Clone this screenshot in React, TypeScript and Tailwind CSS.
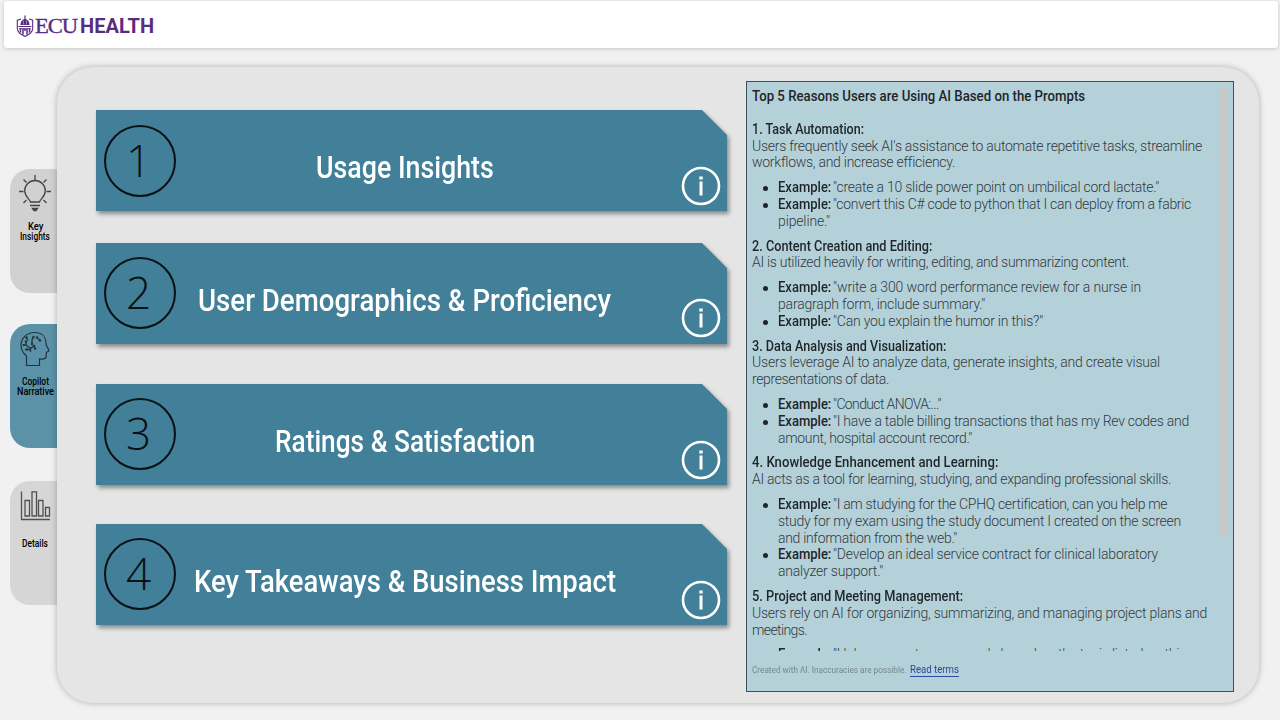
import { useLayoutEffect, useRef, useState, type ReactNode } from "react";

/* Sets a single line of text to a given measure by adjusting its tracking. */
function Fit({ w, children, className = "" }: { w: number; children: ReactNode; className?: string }) {
  const ref = useRef<HTMLSpanElement>(null);
  const [spacing, setSpacing] = useState(0);
  useLayoutEffect(() => {
    const el = ref.current;
    if (!el) return;
    const count = (el.textContent ?? "").length;
    setSpacing((w - el.getBoundingClientRect().width) / count);
  }, [w]);
  return (
    <span ref={ref} className={`inline-block whitespace-nowrap ${className}`} style={{ letterSpacing: `${spacing}px` }}>
      {children}
    </span>
  );
}

/* Sets a single line of text to a given measure by condensing its letters. */
function Condensed({ w, children }: { w: number; children: ReactNode }) {
  const ref = useRef<HTMLSpanElement>(null);
  const [scale, setScale] = useState(1);
  useLayoutEffect(() => {
    const el = ref.current;
    if (el) setScale(w / el.offsetWidth);
  }, [w]);
  return (
    <span className="flex" style={{ width: `${w}px` }}>
      <span ref={ref} className="block shrink-0 origin-left whitespace-nowrap" style={{ transform: `scaleX(${scale})` }}>
        {children}
      </span>
    </span>
  );
}

type Line = [text: string, width: number];
type Section = { title: Line; body: Line[]; items: Line[][] };

const sections: Section[] = [
  {
    title: ["1. Task Automation:", 112],
    body: [
      ["Users frequently seek AI's assistance to automate repetitive tasks, streamline", 450],
      ["workflows, and increase efficiency.", 202],
    ],
    items: [
      [['"create a 10 slide power point on umbilical cord lactate."', 326]],
      [['"convert this C# code to python that I can deploy from a fabric', 358], ['pipeline."', 52]],
    ],
  },
  {
    title: ["2. Content Creation and Editing:", 180],
    body: [["AI is utilized heavily for writing, editing, and summarizing content.", 377]],
    items: [
      [['"write a 300 word performance review for a nurse in', 308], ['paragraph form, include summary."', 207]],
      [['"Can you explain the humor in this?"', 210]],
    ],
  },
  {
    title: ["3. Data Analysis and Visualization:", 194],
    body: [
      ["Users leverage AI to analyze data, generate insights, and create visual", 408],
      ["representations of data.", 137],
    ],
    items: [
      [['"Conduct ANOVA:..."', 108]],
      [['"I have a table billing transactions that has my Rev codes and', 356], ['amount, hospital account record."', 194]],
    ],
  },
  {
    title: ["4. Knowledge Enhancement and Learning:", 246],
    body: [["AI acts as a tool for learning, studying, and expanding professional skills.", 419]],
    items: [
      [
        ['"I am studying for the CPHQ certification, can you help me', 334],
        ["study for my exam using the study document I created on the screen", 403],
        ['and information from the web."', 179],
      ],
      [['"Develop an ideal service contract for clinical laboratory', 325], ['analyzer support."', 105]],
    ],
  },
  {
    title: ["5. Project and Meeting Management:", 211],
    body: [
      ["Users rely on AI for organizing, summarizing, and managing project plans and", 455],
      ["meetings.", 55],
    ],
    items: [[['"Help me create an example based on the topic listed on this', 353]]],
  },
];

function Narrative() {
  return (
    <aside className="-mt-px flex h-[611px] w-[488px] shrink-0 flex-col border border-[#3c5259] bg-[#b4d1da] pt-[6px] pl-[5px] text-[14px] leading-[16.8px]">
      <div className="flex h-[563px] shrink-0">
        <div className="w-[466px] overflow-hidden">
          <div className="mb-[16px] font-medium text-[#1f2528]">
            <Condensed w={333}>Top 5 Reasons Users are Using AI Based on the Prompts</Condensed>
          </div>
          {sections.map((s) => (
            <section key={s.title[0]} className="mb-2 text-[#33393c]">
              <h2 className="flex h-[16.8px] font-medium text-[#1f2528]">
                <Condensed w={s.title[1]}>{s.title[0]}</Condensed>
              </h2>
              {s.body.map(([t, w]) => (
                <p key={t} className="flex h-[16.8px] font-light">
                  <Fit w={w}>{t}</Fit>
                </p>
              ))}
              <ul className="mt-[8px] pl-[26px]">
                {s.items.map((lines) => (
                  <li key={lines[0][0]} className="relative">
                    <span className="absolute top-[7px] -left-[15px] size-[5px] rounded-full bg-[#1f2528]" />
                    {lines.map(([t, w], i) => (
                      <div key={t} className="flex h-[16.8px] font-light">
                        {i === 0 && (
                          <span className="w-[55px] shrink-0 font-medium text-[#1f2528]">
                            <Condensed w={53}>Example:</Condensed>
                          </span>
                        )}
                        <Fit w={w}>{t}</Fit>
                      </div>
                    ))}
                  </li>
                ))}
              </ul>
            </section>
          ))}
        </div>
        <div className="ml-px h-[447px] w-[9px] bg-[#c8c8c8]" />
      </div>
      <footer className="mt-[11px] flex items-center text-[9px] text-[#75868b]">
        <span className="w-[158px]">
          <Condensed w={154}>Created with AI. Inaccuracies are possible.</Condensed>
        </span>
        <a className="border-b border-[#2d489d] text-[11px] leading-[12px] text-[#2d489d]">
          <Condensed w={49}>Read terms</Condensed>
        </a>
      </footer>
    </aside>
  );
}

function Card({ n, title, w, left, gap, ring, info }: { n: number; title: string; w: number; left: string; gap: string; ring: string; info: string }) {
  return (
    <div className={`${gap} drop-shadow-[2px_3px_2px_rgba(0,0,0,0.4)]`}>
      <div className="flex h-[101px] w-[631px] bg-[#418098] [clip-path:polygon(0_0,606px_0,100%_25px,100%_100%,0_100%)]">
        <div className={`${ring} ml-[7.5px] flex size-[72px] shrink-0 items-center justify-center rounded-full border-2 border-[#0a1114] font-['Open_Sans',sans-serif] text-[44px] leading-none font-light text-[#0a1114]`}>
          <span className="-mt-[2px] -ml-[2px]">{n}</span>
        </div>
        <div className="flex flex-1">
          <div className={`${left} mt-[38px] text-[31px] leading-[40px] font-medium text-white`}>
            <Condensed w={w}>{title}</Condensed>
          </div>
        </div>
        <svg className={`${info} mr-[6px] size-[40px] shrink-0`} viewBox="0 0 40 40" fill="none">
          <circle cx="20" cy="20" r="18" stroke="#fff" strokeWidth="2.6" />
          <path d="M20 15.5v14" stroke="#fff" strokeWidth="3" />
          <path d="M20 10.500v3" stroke="#fff" strokeWidth="3.400" />
        </svg>
      </div>
    </div>
  );
}

function Tab({ color, gap, icon, lines }: { color: string; gap: string; icon: ReactNode; lines: Line[] }) {
  return (
    <div className={`${color} ${gap} flex h-[124px] w-[47px] flex-col items-center rounded-l-[20px] text-[10px] leading-[10px] font-medium text-black`}>
      <div className="h-[52px] pl-0.5">{icon}</div>
      <div className={`flex flex-col items-center pl-[3px] ${lines.length === 1 ? "pt-[6px]" : "pt-[1px]"}`}>
        {lines.map(([t, w]) => (
          <Condensed key={t} w={w}>{t}</Condensed>
        ))}
      </div>
    </div>
  );
}

const bulb = (
  <svg className="mt-[5px] h-[40px] w-[36px]" viewBox="0 0 36 40" fill="none" stroke="#444" strokeWidth="1.3">
    <path d="M18 1v5M2 17.500h4.500M29.500 17.500H34M6.500 5.500l3 3M29.500 5.500l-3 3M6.500 29l3-3M29.500 29l-3-3" />
    <path d="M13.500 28c-.8-3.200-5.800-5.200-5.800-11.200a10.300 10.300 0 0 1 20.600 0c0 6-5 8-5.800 11.200zM13 31.500h10" />
    <path d="M15.500 34.500h5l-1.500 2h-2z" fill="#444" />
  </svg>
);

const head = (
  <svg className="mt-[7px] h-[37px] w-[32px]" viewBox="0 0 32 37" fill="none" stroke="#22343b" strokeWidth="1.2">
    <path d="M7.500 34.500V25C4 22 2 18.500 2 14.500 2 7 8 1.500 15.500 1.500S27 6 27 12.500c0 2.500 2.500 5 3 7 .2 1.300-2.500 1-2.700 2.200-.2 1.500.2 3-.3 4.600-.8 2.400-4 1.700-6.500 1.700v6.500z" />
    <path d="M11.500 21v-3.500L7 14v-3M11.500 17.500l4-3.500M7 14H4.500M9 9.500 7.500 6.500M13 13V8.500l1.500-2M18 7l3 2M15.500 14v3M7.500 18.500h4" strokeWidth="1.300" />
    <g fill="#22343b" stroke="none">
      <circle cx="7" cy="10.500" r="1.200" /><circle cx="7.500" cy="6.500" r="1.200" /><circle cx="13" cy="13" r="1.200" />
      <circle cx="14.500" cy="6" r="1.200" /><circle cx="18" cy="6.500" r="1.200" /><circle cx="21" cy="9.500" r="1.200" />
      <circle cx="16" cy="17.500" r="1.200" /><circle cx="7.500" cy="18.500" r="1.300" /><circle cx="4.500" cy="14" r="1.100" />
    </g>
  </svg>
);

const bars = (
  <svg className="mt-[9px] h-[32px] w-[32px]" viewBox="0 0 32 32" fill="none" stroke="#505050" strokeWidth="1.300">
    <path d="M2.500 1.500v28H31M6 10.500h4.500V26H6zM13 1.800h4.500V26H13zM19.500 10.500H24V26h-4.500zM26.500 17.500h4V26h-4z" />
  </svg>
);

function Crest() {
  return (
    <svg className="h-[23px] w-[18px]" viewBox="0 0 18 23" fill="none" stroke="#582c83">
      <path d="M5 4 1.300 5.200v8.300c0 4.200 3.800 6 7.700 8 3.900-2 7.700-3.800 7.700-8V5.200L13 4" strokeWidth="1.100" />
      <path d="M9 .5v4" strokeWidth="1.200" />
      <path d="M4.500 10c0-3.500 2-6 4.500-6s4.500 2.500 4.500 6z" fill="#582c83" stroke="none" />
      <path d="M2.500 11.500h13M3 13.700h12" strokeWidth="1" />
      <path d="M4.500 14v3.500M7 14v5.500M9 14v2M11 14v5.500M13.500 14v3.500" strokeWidth="1.500" />
      <path d="M7.500 5.500v4M10.500 5.500v4" stroke="#fff" strokeWidth=".4" />
    </svg>
  );
}

export default function App() {
  return (
    <div className="flex h-[720px] w-[1280px] flex-col overflow-hidden bg-[#f1f1f1] pt-px font-[Roboto,sans-serif]">
      <header className="ml-[4px] flex h-[47px] w-[1274px] shrink-0 items-center rounded-[3px] bg-white pl-[12px] text-[#582c83] shadow-[0_1px_4px_rgba(0,0,0,0.18)]">
        <div className="flex items-center pt-1">
          <Crest />
          <div className="ml-[1px] w-[45px] font-['Liberation_Serif',serif] text-[21px] leading-[23px] [-webkit-text-stroke:0.35px_#582c83]">
            <Condensed w={42}>
              <span className="tracking-[-1px]">ECU</span>
            </Condensed>
          </div>
          <div className="text-[19.500px] leading-[23px] font-bold">
            <Condensed w={74}>HEALTH</Condensed>
          </div>
        </div>
      </header>
      <div className="mt-[19px] flex pl-[10px]">
        <nav className="w-[47px] shrink-0 pt-[102px]">
          <Tab color="bg-[#d1d1d1]" gap="mb-[31px]" icon={bulb} lines={[["Key", 15], ["Insights", 30]]} />
          <Tab color="bg-[#5c92a7]" gap="mb-[33px]" icon={head} lines={[["Copilot", 27], ["Narrative", 37]]} />
          <Tab color="bg-[#d6d6d6]" gap="mb-0" icon={bars} lines={[["Details", 26]]} />
        </nav>
        <main className="relative flex h-[636px] w-[1202px] shrink-0 rounded-[36px] bg-[#e5e5e5] pt-[15px] pl-[39px] shadow-[0_0_6px_rgba(0,0,0,0.28)]">
          <div className="w-[650px] shrink-0 pt-[28px]">
            <Card n={1} title="Usage Insights" w={178} left="ml-[140px]" gap="mb-[32px]" ring="mt-[15px]" info="mt-[55.5px]" />
            <Card n={2} title="User Demographics & Proficiency" w={413} left="ml-[22px]" gap="mb-[40px]" ring="mt-[14px]" info="mt-[55px]" />
            <Card n={3} title="Ratings & Satisfaction" w={260} left="ml-[99px]" gap="mb-[39px]" ring="mt-[14px]" info="mt-[55.5px]" />
            <Card n={4} title="Key Takeaways & Business Impact" w={422} left="ml-[18px]" gap="mb-0" ring="mt-[14px]" info="mt-[55.5px]" />
          </div>
          <Narrative />
        </main>
      </div>
    </div>
  );
}
